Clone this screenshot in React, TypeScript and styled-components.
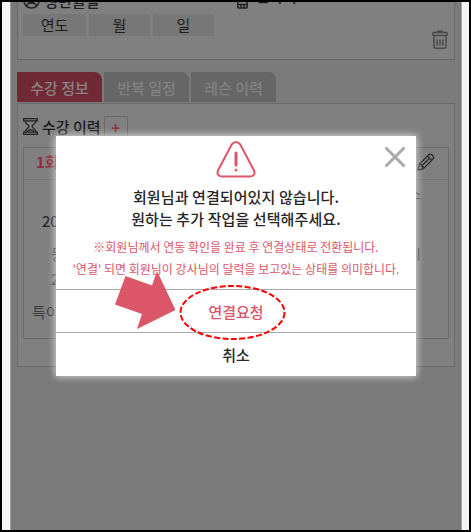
import React from "react";
import styled, { createGlobalStyle } from "styled-components";

const GlobalStyle = createGlobalStyle`
  *, *::before, *::after { box-sizing: border-box; }
  body {
    margin: 0;
    overflow: hidden;
    font-family: "Noto Sans CJK KR", "Noto Sans", sans-serif;
    font-size: 15px;
    color: #1c1c1c;
  }
  button { font: inherit; color: inherit; padding: 0; margin: 0; border: 0; background: none; }
`;

const Frame = styled.div`
  position: relative;
  width: 471px;
  height: 532px;
  padding: 0 7px 0 8px;
  border: 2px solid #000;
  background: #f4f4f4;
  overflow: hidden;
`;

const Screen = styled.main`
  height: 100%;
  padding: 0 6px;
  border-left: 1px solid #a0a0a0;
  border-right: 1px solid #a5a5a5;
  background: #7a7a7a;
  overflow: hidden;
`;

const Profile = styled.section`
  height: 58px;
  width: 438px;
  padding: 0 5px;
  background: #808080;
  border: solid #6a6a6a;
  border-width: 0 1px 1px;
  display: flex;
  justify-content: space-between;
`;

const Birth = styled.div`
  width: 213px;
`;

const ClippedLabel = styled.div<{ $lift: number }>`
  display: flex;
  align-items: flex-end;
  height: 8px;
  font-weight: 500;
  line-height: 15px;
  svg { flex: none; margin: 0 4px 1px 0; }
  span { margin-bottom: ${(p) => p.$lift}px; }
`;

const DateRow = styled.div`
  display: flex;
  gap: 3px;
  margin-top: 4px;
`;

const DateButton = styled.button<{ $w: number }>`
  width: ${(p) => p.$w}px;
  height: 22px;
  line-height: 22px;
  background: #777;
  text-align: center;
`;

const Contact = styled.div`
  width: 213px;
  display: flex;
  flex-direction: column;
  justify-content: space-between;
  padding: 0 0 10px 1px;
  svg.trash { align-self: flex-end; margin-right: 1px; }
`;

const Tabs = styled.nav`
  display: flex;
  gap: 2px;
  margin-top: 12px;
`;

const Tab = styled.button<{ $active?: boolean }>`
  width: 85px;
  height: 30px;
  line-height: 31px;
  font-weight: 500;
  border-radius: 0 8px 0 0;
  background: ${(p) => (p.$active ? "#702a35" : "#666")};
  color: ${(p) => (p.$active ? "#8b8384" : "#828282")};
`;

const History = styled.section`
  width: 438px;
  height: 264px;
  margin-top: 1px;
  padding: 12px 5px 0;
  background: #808080;
  border: 1px solid #6a6a6a;
`;

const HistoryHead = styled.div`
  display: flex;
  align-items: flex-start;
  height: 31px;
  font-weight: 500;
  line-height: 22px;
  svg { margin: 2px 4px 0 0; }
`;

const AddButton = styled.button`
  width: 24px;
  height: 24px;
  margin-left: 3px;
  border: 1px solid #6b6b6b;
  color: #8d303e;
  font-weight: 700;
  line-height: 22px;
`;

const Card = styled.div`
  width: 426px;
  height: 192px;
  border: 1px solid #6c6c6c;
  overflow: hidden;
`;

const CardHead = styled.div`
  display: flex;
  justify-content: space-between;
  align-items: center;
  height: 32px;
  padding: 0 13px 5px 12px;
  border-bottom: 1px solid #747474;
  color: #8d303e;
  font-weight: 700;
  svg { margin-top: 2px; }
`;

const CardRow = styled.div<{ $h: number; $left: number; $dim?: boolean }>`
  display: flex;
  justify-content: space-between;
  align-items: center;
  height: ${(p) => p.$h}px;
  padding: 0 27px 0 ${(p) => p.$left}px;
  color: ${(p) => (p.$dim ? "#3c3c3c" : "#1c1c1c")};
  span:last-child:not(:only-child) { font-size: 14px; }
`;

const Dialog = styled.section`
  position: absolute;
  left: 54px;
  top: 134px;
  width: 360px;
  height: 240px;
  background: #fff;
  box-shadow: 0 0 7px 1px rgba(255, 255, 255, 0.65);
  text-align: center;
`;

const DialogBody = styled.div`
  height: 153px;
  padding-top: 5px;
  svg.warn { display: block; margin: 0 auto; }
`;

const CloseButton = styled.button`
  position: absolute;
  top: 10px;
  right: 10px;
  width: 22px;
  height: 22px;
  svg { display: block; }
`;

const Title = styled.h1`
  margin: 8px 0 0;
  font-size: 15px;
  font-weight: 500;
  letter-spacing: 0.1px;
  line-height: 22px;
  color: #262626;
`;

const Note = styled.p`
  margin: 6px 0 0;
  font-size: 12px;
  line-height: 22px;
  color: #db5668;
`;

const DialogAction = styled.button<{ $primary?: boolean }>`
  display: block;
  width: 100%;
  height: 43px;
  border-top: 1px solid #aaa;
  color: ${(p) => (p.$primary ? "#db5668" : "#262626")};
  font-weight: 500;
  line-height: 44px;
`;

const Annotations = styled.svg`
  position: absolute;
  left: 112px;
  top: 266px;
  pointer-events: none;
`;

const PersonIcon = () => (
  <svg width="17" height="17" viewBox="0 0 17 17" fill="none" stroke="#222" strokeWidth="1.5">
    <circle cx="8.5" cy="8.5" r="7.6" />
    <circle cx="8.5" cy="8" r="3" />
    <path d="M3.5 14c1-4 9-4 10 0" />
  </svg>
);

const PhoneIcon = () => (
  <svg width="11" height="16" viewBox="0 0 11 16" fill="none" stroke="#222" strokeWidth="1.5">
    <rect x=".8" y=".8" width="9.4" height="14.2" rx="1" />
    <path d="M1 11.5h9M4 11.5V15M7 11.5V15" />
  </svg>
);

const TrashIcon = () => (
  <svg className="trash" width="16" height="19" viewBox="0 0 16 19" fill="none" stroke="#484848" strokeWidth="1.5">
    <path d="M5.3 2.5C5.4.4 10.6.4 10.7 2.5" />
    <rect x=".8" y="2.6" width="14.4" height="2.8" rx="1.2" />
    <path d="M2 5.5v11q0 1.7 1.7 1.7h8.6q1.7 0 1.7-1.7v-11" />
    <path d="M5.2 9.5v6M8 9.5v6M10.8 9.5v6" />
  </svg>
);

const HourglassIcon = () => (
  <svg width="15" height="17" viewBox="0 0 15 17" fill="none" stroke="#222" strokeWidth="1.3">
    <path d="M.7.7h13.6v2.2H.7zM.7 14.1h13.6v2.2H.7z" />
    <path d="M2.2 3c0 3.2 3.7 3.6 3.7 5.5S2.2 11 2.2 14M12.8 3c0 3.2-3.7 3.6-3.7 5.5s3.7 2.5 3.7 5.5" />
    <path d="M4 13.4l3.5-2 3.5 2" />
  </svg>
);

const PencilIcon = () => (
  <svg width="18" height="18" viewBox="0 0 18 18" fill="none" stroke="#2b2b2b" strokeWidth="1.3" strokeLinejoin="round">
    <path d="M1 17l1.2-5.6L11.8 1.8q1.5-1.6 3.6.5t.6 3.7L6.5 15.6z" />
    <path d="M2.3 11.4l2 .3.4 1.8 1.8.5v1.5M4.9 12.8l8-8M10.5 3.1l4.2 4" />
  </svg>
);

export default function App() {
  return (
    <>
      <GlobalStyle />
      <Frame>
        <Screen>
          <Profile>
            <Birth>
              <ClippedLabel $lift={2}><PersonIcon /><span>생년월일</span></ClippedLabel>
              <DateRow>
                <DateButton $w={63}>연도</DateButton>
                <DateButton $w={61}>월</DateButton>
                <DateButton $w={61}>일</DateButton>
              </DateRow>
            </Birth>
            <Contact>
              <ClippedLabel $lift={7}><PhoneIcon /><span>&nbsp;연락처</span></ClippedLabel>
              <TrashIcon />
            </Contact>
          </Profile>
          <Tabs>
            <Tab $active>수강 정보</Tab>
            <Tab>반복 일정</Tab>
            <Tab>레슨 이력</Tab>
          </Tabs>
          <History>
            <HistoryHead>
              <HourglassIcon />수강 이력<AddButton>+</AddButton>
            </HistoryHead>
            <Card>
              <CardHead>1회<PencilIcon /></CardHead>
              <CardRow $h={26} $left={18} $dim><span /><span>소</span></CardRow>
              <CardRow $h={28} $left={18}>20</CardRow>
              <CardRow $h={38} $left={27} $dim><span>등록</span><span>시</span></CardRow>
              <CardRow $h={12} $left={27} $dim>2</CardRow>
              <CardRow $h={54} $left={8} $dim>특이</CardRow>
            </Card>
          </History>
        </Screen>

        <Dialog role="dialog">
          <CloseButton aria-label="닫기">
            <svg width="22" height="22" viewBox="0 0 22 22" stroke="#aaa" strokeWidth="3">
              <path d="M1.5 1.5l19 19M20.5 1.5l-19 19" />
            </svg>
          </CloseButton>
          <DialogBody>
            <svg className="warn" width="40" height="37" viewBox="0 0 40 37" fill="none" stroke="#db5668" strokeWidth="2" strokeLinecap="round">
              <path d="M15.7 3.5q4.3-5 8.6 0L38 29.5q2 5.5-4 6H6q-6-.5-4-6z" />
              <path d="M20 12v12" strokeWidth="3" />
              <circle cx="20" cy="29" r=".6" />
            </svg>
            <Title>회원님과 연결되어있지 않습니다.<br />원하는 추가 작업을 선택해주세요.</Title>
            <Note>※회원님께서 연동 확인을 완료 후 연결상태로 전환됩니다.<br />'연결' 되면 회원님이 강사님의 달력을 보고있는 상태를 의미합니다.</Note>
          </DialogBody>
          <DialogAction $primary>연결요청</DialogAction>
          <DialogAction>취소</DialogAction>
        </Dialog>

        <Annotations width="175" height="75" viewBox="114 268 175 75">
          <path d="M125.5 276L152 285.5L157 271L175.5 310L137 329L142 314L115 304.5z" fill="#db5668" />
          <ellipse cx="232.5" cy="312.5" rx="52" ry="26.5" fill="none" stroke="red" strokeWidth="2" strokeDasharray="6 2.4" />
        </Annotations>
      </Frame>
    </>
  );
}
